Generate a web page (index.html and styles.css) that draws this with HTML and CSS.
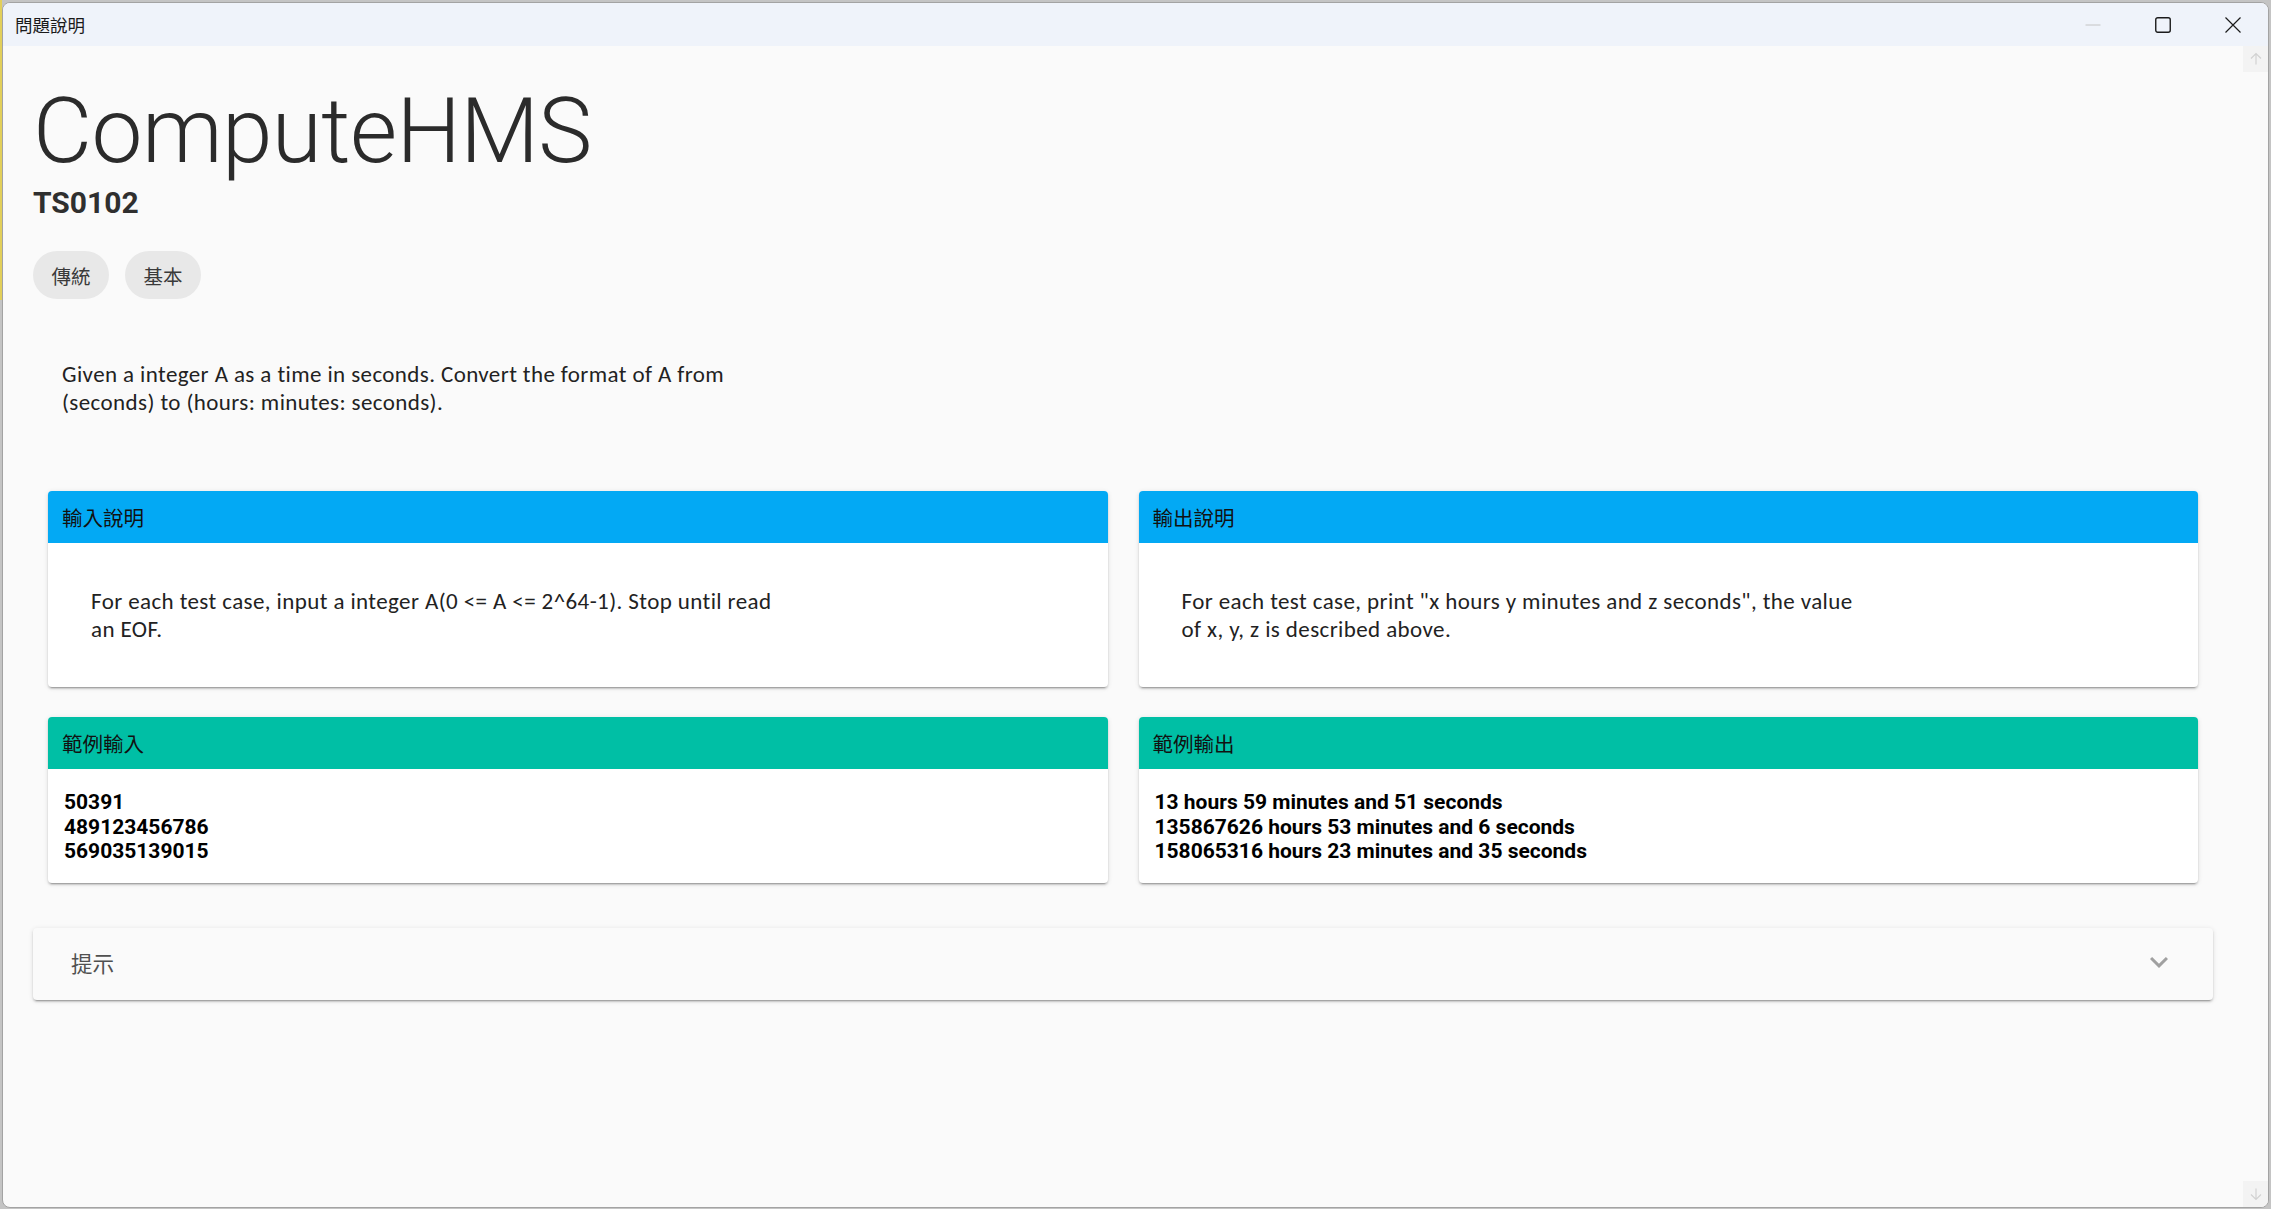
FILE: index.html
```html
<!DOCTYPE html>
<html lang="zh-Hant">
<head>
<meta charset="utf-8">
<title>問題說明</title>
<link rel="stylesheet" href="styles.css">
</head>
<body>
<div class="window">
  <header class="titlebar">
    <span class="title">問題說明</span>
    <div class="controls">
      <button class="ctl ctl-min" aria-label="minimize">
        <svg width="16" height="16" viewBox="0 0 16 16"><path d="M0.5 8h15" stroke="#c4c4c4" stroke-width="1" fill="none"/></svg>
      </button>
      <button class="ctl" aria-label="maximize">
        <svg width="16" height="16" viewBox="0 0 16 16"><rect x="0.75" y="0.75" width="14.5" height="14.5" rx="2" stroke="#1b1b1b" stroke-width="1.4" fill="none"/></svg>
      </button>
      <button class="ctl" aria-label="close">
        <svg width="16" height="16" viewBox="0 0 16 16"><path d="M0.5 0.5L15.5 15.5M15.5 0.5L0.5 15.5" stroke="#1b1b1b" stroke-width="1.2" fill="none"/></svg>
      </button>
    </div>
  </header>
  <div class="body">
    <main class="page">
      <h1 class="prob-title">ComputeHMS</h1>
      <h2 class="prob-id">TS0102</h2>
      <div class="chips">
        <span class="chip">傳統</span>
        <span class="chip">基本</span>
      </div>
      <p class="desc">Given a integer A as a time in seconds. Convert the format of A from<br>(seconds) to (hours: minutes: seconds).</p>

      <section class="cards">
        <article class="card">
          <div class="card-head blue">輸入說明</div>
          <div class="card-body text">For each test case, input a integer A(0 &lt;= A &lt;= 2^64-1). Stop until read<br>an EOF.</div>
        </article>
        <article class="card">
          <div class="card-head blue">輸出說明</div>
          <div class="card-body text">For each test case, print "x hours y minutes and z seconds", the value<br>of x, y, z is described above.</div>
        </article>
        <article class="card">
          <div class="card-head teal">範例輸入</div>
          <div class="card-body sample">50391<br>489123456786<br>569035139015</div>
        </article>
        <article class="card">
          <div class="card-head teal">範例輸出</div>
          <div class="card-body sample">13 hours 59 minutes and 51 seconds<br>135867626 hours 53 minutes and 6 seconds<br>158065316 hours 23 minutes and 35 seconds</div>
        </article>
      </section>

      <div class="panel">
        <span class="panel-title">提示</span>
        <svg class="chev" width="36" height="36" viewBox="0 0 24 24"><path d="M16.59 8.59L12 13.17 7.41 8.59 6 10l6 6 6-6z" fill="#a0a0a0"/></svg>
      </div>
    </main>
    <aside class="scrollbar">
      <div class="arrow">
        <svg width="14" height="14" viewBox="0 0 14 14"><path d="M7 12.5V1.5M2 6.5l5-5 5 5" stroke="#d2d2d2" stroke-width="1.2" fill="none"/></svg>
      </div>
      <div class="arrow">
        <svg width="14" height="14" viewBox="0 0 14 14"><path d="M7 1.5v11M2 7.5l5 5 5-5" stroke="#d2d2d2" stroke-width="1.2" fill="none"/></svg>
      </div>
    </aside>
  </div>
</div>
</body>
</html>
```

FILE: styles.css
```css
* { box-sizing: border-box; }

html, body {
  margin: 0;
  height: 1209px;
  overflow: hidden;
}

body {
  background: linear-gradient(#e2cf5a, #e2cf5a) 0 0 / 2px 300px no-repeat, #c4c4c4;
  padding-top: 2px;
  padding-left: 2px;
}

.window {
  width: 2267px;
  height: 1206px;
  border: 1px solid #a3a3a3;
  border-radius: 8px;
  overflow: hidden;
  background: #fafafa;
  display: flex;
  flex-direction: column;
}

.titlebar {
  height: 43px;
  flex: none;
  background: #eff3fa;
  display: flex;
  align-items: center;
  justify-content: space-between;
  padding-left: 12px;
}

.title {
  font-family: "Noto Sans CJK TC", "Noto Sans", sans-serif;
  font-size: 17.5px;
  color: #1a1a1a;
}

.controls {
  display: flex;
  height: 100%;
}

.ctl {
  width: 70px;
  height: 100%;
  border: 0;
  background: transparent;
  display: flex;
  align-items: center;
  justify-content: center;
  padding: 0;
}

.body {
  flex: 1;
  display: flex;
  min-height: 0;
}

.page {
  flex: 1;
  padding: 30px 30px 0 30px;
  min-width: 0;
}

.scrollbar {
  width: 25px;
  flex: none;
  display: flex;
  flex-direction: column;
  justify-content: space-between;
}

.arrow {
  height: 26px;
  background: #f3f3f3;
  display: flex;
  align-items: center;
  justify-content: center;
}

.prob-title {
  margin: 0;
  font-family: Roboto, sans-serif;
  font-weight: 300;
  font-size: 91px;
  line-height: 110px;
  color: #2b2b2b;
  letter-spacing: -0.6px;
}

.prob-id {
  margin: 0;
  font-family: Roboto, sans-serif;
  font-weight: 700;
  font-size: 30px;
  line-height: 34px;
  color: #2f2f2f;
}

.chips {
  display: flex;
  gap: 16px;
  margin-top: 31px;
}

.chip {
  height: 48px;
  padding: 0 18.5px;
  border-radius: 24px;
  background: #e8e8e8;
  display: inline-flex;
  align-items: center;
  font-family: "Noto Sans CJK TC", sans-serif;
  font-size: 19.5px;
  color: #3a3a3a;
}

.desc {
  margin: 61px 0 0 29px;
  font-family: Carlito, Lato, sans-serif;
  font-size: 23px;
  letter-spacing: 0.4px;
  line-height: 28px;
  color: #222;
}

.cards {
  margin: 75px 15px 0 15px;
  display: grid;
  grid-template-columns: 1fr 1fr;
  column-gap: 31px;
  row-gap: 30px;
}

.card {
  background: #fff;
  border-radius: 4px;
  overflow: hidden;
  box-shadow: 0 3px 1px -2px rgba(0,0,0,.2), 0 2px 2px 0 rgba(0,0,0,.14), 0 1px 5px 0 rgba(0,0,0,.12);
}

.card-head {
  height: 52px;
  padding-left: 14px;
  display: flex;
  align-items: center;
  font-family: "Noto Sans CJK TC", sans-serif;
  font-size: 20.5px;
  color: #111;
}

.card-head.blue { background: #03a9f4; }
.card-head.teal { background: #00bfa5; }

.card-body.text {
  padding: 44px 43px;
  font-family: Carlito, Lato, sans-serif;
  font-size: 23px;
  letter-spacing: 0.4px;
  line-height: 28px;
  color: #222;
}

.card-body.sample {
  padding: 21px 16px 19px 16px;
  font-family: Roboto, sans-serif;
  font-weight: 700;
  font-size: 21px;
  line-height: 24.5px;
  color: #000;
}

.panel {
  margin-top: 45px;
  height: 72px;
  background: #fafafa;
  border-radius: 4px;
  box-shadow: 0 3px 1px -2px rgba(0,0,0,.2), 0 2px 2px 0 rgba(0,0,0,.14), 0 1px 5px 0 rgba(0,0,0,.12);
  display: flex;
  align-items: center;
  justify-content: space-between;
  padding: 0 36px 3px 38px;
}

.panel-title {
  font-family: "Noto Sans CJK TC", sans-serif;
  font-size: 21.5px;
  color: #505050;
}

.chev { display: block; }
```
